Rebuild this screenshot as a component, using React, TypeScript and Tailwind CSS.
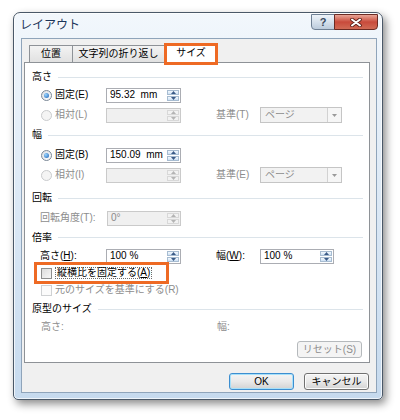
import React from "react";

const FONT = "font-['Liberation_Sans','Noto_Sans_CJK_JP',sans-serif]";

function Radio({ checked, disabled }: { checked?: boolean; disabled?: boolean }) {
    return (
        <span
            className={`flex h-[11px] w-[11px] shrink-0 items-center justify-center rounded-full border ${
                disabled ? "border-[#c9cbcd] bg-[#f4f4f4]" : "border-[#7b8896] bg-gradient-to-br from-[#d9dee4] to-white"
            }`}
        >
            {checked && <span className="h-[5px] w-[5px] rounded-full bg-[radial-gradient(circle_at_35%_35%,#9ad6ff,#1b5fb5)]" />}
        </span>
    );
}

function Check({ disabled }: { disabled?: boolean }) {
    return (
        <span
            className={`h-[11px] w-[11px] shrink-0 border ${
                disabled ? "border-[#cfd1d3] bg-[#fbfbfb]" : "border-[#8e8f8f] bg-gradient-to-br from-[#dcdcdc] to-[#f7f7f7]"
            }`}
        />
    );
}

function Arrow({ up, color }: { up?: boolean; color: string }) {
    return (
        <svg width="5" height="3" viewBox="0 0 5 3">
            <path d={up ? "M0 3 L2.5 0 L5 3Z" : "M0 0 L2.5 3 L5 0Z"} fill={color} />
        </svg>
    );
}

function Spin({ disabled }: { disabled?: boolean }) {
    const btn = disabled
        ? "border-[#d8d8d8] bg-[#f2f2f2]"
        : "border-[#a7bcd1] bg-gradient-to-b from-[#f4f9fd] to-[#cde1f5]";
    const c = disabled ? "#b4b4b4" : "#3b5b87";
    return (
        <div className="flex h-full w-[13px] flex-col gap-px py-px pr-px">
            <div className={`flex flex-1 items-center justify-center border ${btn}`}>
                <Arrow up color={c} />
            </div>
            <div className={`flex flex-1 items-center justify-center border ${btn}`}>
                <Arrow color={c} />
            </div>
        </div>
    );
}

function NumInput({ value, disabled, w = "w-[75px]" }: { value?: string; disabled?: boolean; w?: string }) {
    return (
        <div
            className={`flex h-[15px] ${w} items-center border ${
                disabled ? "border-[#cacaca] bg-[#f0f0f0] text-[#8a8a8a]" : "border-[#abadb3] bg-white text-black"
            }`}
        >
            <span className="flex-1 whitespace-pre pl-[3px] text-[10px] leading-none">{value}</span>
            <Spin disabled={disabled} />
        </div>
    );
}

function Select() {
    return (
        <div className="flex h-[16px] w-[82px] items-center border border-[#c5c5c5] bg-[#f2f2f2]">
            <span className="flex-1 pl-[4px] text-[10px] leading-none text-[#8d8d8d]">ページ</span>
            <div className="flex h-full w-[14px] items-center justify-center border-l border-[#d2d2d2] bg-[#f6f6f6]">
                <Arrow color="#9a9a9a" />
            </div>
        </div>
    );
}

function Section({ label, h }: { label: string; h: string }) {
    return (
        <div className={`flex items-center gap-[6px] ${h}`}>
            <span className="text-[10px] leading-none text-black">{label}</span>
            <div className="h-px flex-1 bg-[#dce4ea]" />
        </div>
    );
}

function RadioRow({ label, checked, disabled, value, side }: { label: string; checked?: boolean; disabled?: boolean; value?: string; side?: string }) {
    return (
        <div className="flex h-[20px] items-center">
            <div className="flex w-[74px] items-center gap-[3px] pl-[9px]">
                <Radio checked={checked} disabled={disabled} />
                <span className={`text-[10px] leading-none ${disabled ? "text-[#8d8d8d]" : "text-black"}`}>{label}</span>
            </div>
            <NumInput value={value} disabled={disabled} />
            {side && (
                <>
                    <span className="ml-[35px] w-[44px] text-[10px] leading-none text-[#8d8d8d]">{side}</span>
                    <Select />
                </>
            )}
        </div>
    );
}

function WinButton({ label, primary, disabled }: { label: string; primary?: boolean; disabled?: boolean }) {
    if (disabled) {
        return (
            <div className="flex h-[17px] w-[65px] items-center justify-center rounded-[3px] border border-[#b5b9bc] bg-[#f4f4f4] text-[10px] leading-none text-[#8d8d8d]">
                {label}
            </div>
        );
    }
    return (
        <div
            className={`flex h-[17px] w-[65px] items-center justify-center rounded-[3px] border bg-gradient-to-b from-[#f4f4f4] via-[#e9e9e9] to-[#d3d3d3] text-[10px] leading-none text-black ${
                primary ? "border-[#3c8ed0] shadow-[inset_0_0_0_1px_#a6e0fa]" : "border-[#707070] shadow-[inset_0_0_0_1px_#fcfcfc]"
            }`}
        >
            {label}
        </div>
    );
}

export default function App() {
    return (
        <div className={`h-[420px] w-[400px] overflow-hidden bg-white pl-[13px] pt-[12px] ${FONT}`}>
            <div className="flex h-[388px] w-[370px] flex-col rounded-t-[7px] rounded-b-[5px] border border-[#4a5868] bg-gradient-to-b from-[#f2f7fc] via-[#dbe8f5] to-[#c6daee] shadow-[3px_4px_9px_rgba(0,0,0,0.45),inset_0_0_0_1px_rgba(255,255,255,0.7)]">
                {/* title bar */}
                <div className="flex h-[25px] items-start">
                    <span className="mt-[6px] pl-[6px] text-[12px] leading-none text-[#1b355a] [text-shadow:0_0_4px_#fff]">レイアウト</span>
                    <div className="ml-auto mr-[4px] mt-px flex h-[16px]">
                        <div className="flex w-[24px] items-center justify-center rounded-bl-[4px] border border-[#6e7f93] bg-gradient-to-b from-[#eef3f8] via-[#d5e0ec] to-[#bccbdc] text-[11px] font-bold leading-none text-[#3a4a5e]">
                            ?
                        </div>
                        <div className="-ml-px flex w-[44px] items-center justify-center rounded-br-[4px] border border-[#6b2a22] bg-gradient-to-b from-[#e8a496] via-[#c84a3b] to-[#d06a55]">
                            <svg width="12" height="9" viewBox="0 0 12 9">
                                <path d="M2 1.5 L10 7.5 M10 1.5 L2 7.5" stroke="#5a1d16" strokeWidth="3.6" strokeLinecap="round" />
                                <path d="M2 1.5 L10 7.5 M10 1.5 L2 7.5" stroke="#fff" strokeWidth="2" strokeLinecap="round" />
                            </svg>
                        </div>
                    </div>
                </div>

                {/* client area */}
                <div className="ml-[7px] mr-[5px] flex h-[355px] flex-col border border-[#8fa4ba] bg-[#f0f0f0] pl-[2px] pr-[6px]">
                    {/* tabs */}
                    <div className="flex h-[23px] items-end pl-[5px]">
                        <div className="flex h-[17px] w-[44px] items-center justify-center border border-b-0 border-[#8e9297] bg-gradient-to-b from-[#f3f3f3] to-[#e1e1e1] text-[10px] leading-none text-black">
                            位置
                        </div>
                        <div className="-ml-px flex h-[17px] w-[93px] items-center justify-center border border-b-0 border-[#8e9297] bg-gradient-to-b from-[#f3f3f3] to-[#e1e1e1] text-[10px] leading-none text-black">
                            文字列の折り返し
                        </div>
                        <div className="relative z-10 -mb-[3px] -ml-px flex h-[22px] w-[54px] items-center justify-center border-[3px] border-[#ee6a24] bg-white pb-[2px] text-[10px] leading-none text-black">
                            サイズ
                        </div>
                    </div>

                    {/* panel */}
                    <div className="flex h-[301px] flex-col border border-[#8e9297] bg-white pl-[7px] pr-[6px] pt-[6px]">
                        <Section label="高さ" h="h-[16px]" />
                        <RadioRow label="固定(E)" checked value="95.32  mm" />
                        <RadioRow label="相対(L)" disabled side="基準(T)" />
                        <Section label="幅" h="h-[20px]" />
                        <RadioRow label="固定(B)" checked value="150.09  mm" />
                        <RadioRow label="相対(I)" disabled side="基準(E)" />
                        <Section label="回転" h="mt-[3px] h-[20px]" />
                        <div className="flex h-[20px] items-center">
                            <span className="w-[75px] pl-[8px] text-[10px] leading-none text-[#8d8d8d]">回転角度(T):</span>
                            <NumInput value="0°" disabled w="w-[74px]" />
                        </div>
                        <Section label="倍率" h="h-[19px]" />
                        <div className="flex h-[18px] items-center">
                            <span className="w-[74px] pl-[8px] text-[10px] leading-none text-black">
                                高さ(<span className="underline">H</span>):
                            </span>
                            <NumInput value="100 %" />
                            <span className="ml-[35px] w-[44px] text-[10px] leading-none text-black">
                                幅(<span className="underline">W</span>):
                            </span>
                            <NumInput value="100 %" w="w-[74px]" />
                        </div>
                        <div className="relative flex h-[16px] items-center gap-[3px] pl-[9px]">
                            <Check />
                            <span className="border border-dotted border-[#6b6b6b] px-px text-[10px] leading-none text-black">
                                縦横比を固定する(<span className="underline">A</span>)
                            </span>
                            <span className="absolute left-[2px] top-[-3px] h-[22px] w-[135px] border-[3px] border-[#ee6a24]" />
                        </div>
                        <div className="flex h-[18px] items-center gap-[3px] pl-[9px]">
                            <Check disabled />
                            <span className="text-[10px] leading-none text-[#8d8d8d]">元のサイズを基準にする(R)</span>
                        </div>
                        <Section label="原型のサイズ" h="h-[20px]" />
                        <div className="flex h-[16px] items-center">
                            <span className="w-[185px] pl-[9px] text-[10px] leading-none text-[#8d8d8d]">高さ:</span>
                            <span className="text-[10px] leading-none text-[#8d8d8d]">幅:</span>
                        </div>
                        <div className="mr-px mt-[6px] flex justify-end">
                            <WinButton label="リセット(S)" disabled />
                        </div>
                    </div>

                    {/* dialog buttons */}
                    <div className="mt-[10px] flex justify-end gap-[10px] pr-px">
                        <WinButton label="OK" primary />
                        <WinButton label="キャンセル" />
                    </div>
                </div>
            </div>
        </div>
    );
}
